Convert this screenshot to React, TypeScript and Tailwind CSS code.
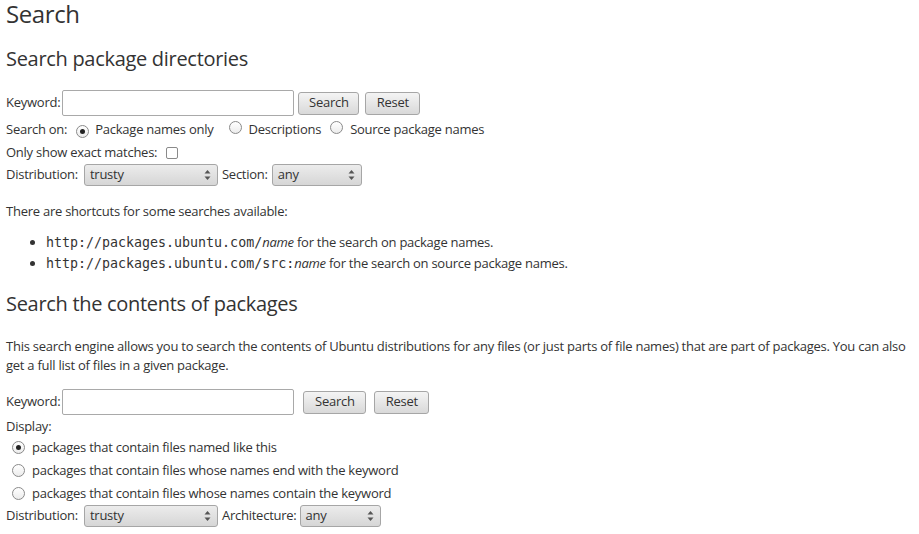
import React from "react";

const ui = "font-['Open_Sans',sans-serif] text-[13px] tracking-[-0.25px] text-[#333]";
const mono = "font-['DejaVu_Sans_Mono',monospace] text-[13.3px] tracking-normal";

function Radio({ checked }: { checked?: boolean }) {
  return (
    <span className="inline-flex h-[13px] w-[13px] shrink-0 items-center justify-center rounded-full border border-[#8a8a8a] bg-gradient-to-b from-[#ffffff] to-[#ececec]">
      {checked && <span className="h-[5px] w-[5px] rounded-full bg-[#222]" />}
    </span>
  );
}

function Button({ label, w }: { label: string; w: string }) {
  return (
    <button
      className={`${w} h-[23px] rounded-[3px] border border-[#a6a6a6] bg-gradient-to-b from-[#f4f4f4] to-[#d9d9d9] text-[13px] text-[#333]`}
    >
      {label}
    </button>
  );
}

function Select({ value, w }: { value: string; w: string }) {
  return (
    <div
      className={`${w} flex h-[22px] items-center justify-between rounded-[3px] border border-[#a6a6a6] bg-gradient-to-b from-[#ececec] to-[#d6d6d6] pl-[5px] pr-[6px]`}
    >
      <span>{value}</span>
      <svg width="7" height="12" viewBox="0 0 7 12">
        <path d="M0.5 4.5 L3.5 1 L6.5 4.5 Z" fill="#555" />
        <path d="M0.5 7.5 L3.5 11 L6.5 7.5 Z" fill="#555" />
      </svg>
    </div>
  );
}

function Input() {
  return <div className="h-[26px] w-[232px] rounded-[2px] border border-[#a9a9a9] bg-white" />;
}

export default function App() {
  return (
    <div className={`${ui} flex flex-col bg-white pl-[6px] pt-[1px]`}>
      <h1 className="text-[24px] leading-[26px] tracking-[-0.4px]">Search</h1>
      <h2 className="mt-[20px] text-[20px] leading-[24px] tracking-[-0.3px]">Search package directories</h2>

      {/* package search form */}
      <div className="mt-[19px] flex h-[26px] items-center">
        <span>Keyword:</span>
        <div className="ml-[2px]">
          <Input />
        </div>
        <div className="ml-[4px] flex gap-[6px]">
          <Button label="Search" w="w-[61px]" />
          <Button label="Reset" w="w-[55px]" />
        </div>
      </div>

      <div className="mt-[2px] flex h-[23px] items-center">
        <span>Search on:</span>
        <span className="ml-[9px]"><Radio checked /></span>
        <span className="ml-[6px]">Package names only</span>
        <span className="ml-[15px]"><Radio /></span>
        <span className="ml-[7px]">Descriptions</span>
        <span className="ml-[9px]"><Radio /></span>
        <span className="ml-[7px]">Source package names</span>
      </div>

      <div className="flex h-[23px] items-center">
        <span>Only show exact matches:</span>
        <span className="ml-[9px] h-[12px] w-[12px] rounded-[2px] border border-[#8a8a8a] bg-white" />
      </div>

      <div className="flex h-[22px] items-center">
        <span>Distribution:</span>
        <div className="ml-[6px]"><Select value="trusty" w="w-[134px]" /></div>
        <span className="ml-[4px]">Section:</span>
        <div className="ml-[4px]"><Select value="any" w="w-[90px]" /></div>
      </div>

      <p className="mt-[16px] leading-[18px]">There are shortcuts for some searches available:</p>

      <ul className="mt-[12px] list-disc pl-[40px] marker:text-[#333]">
        <li className="leading-[21px]">
          <code className={mono}>http://packages.ubuntu.com/</code>
          <i>name</i> for the search on package names.
        </li>
        <li className="leading-[21px]">
          <code className={mono}>http://packages.ubuntu.com/src:</code>
          <i>name</i> for the search on source package names.
        </li>
      </ul>

      <h2 className="mt-[18px] text-[20px] leading-[24px] tracking-[-0.3px]">Search the contents of packages</h2>

      <p className="mt-[21px] pr-[4px] leading-[19px]">
        This search engine allows you to search the contents of Ubuntu distributions for any files (or just parts of
        file names) that are part of packages. You can also get a full list of files in a given package.
      </p>

      {/* contents search form */}
      <div className="mt-[14px] flex h-[26px] items-center">
        <span>Keyword:</span>
        <div className="ml-[2px]">
          <Input />
        </div>
        <div className="ml-[9px] flex gap-[8px]">
          <Button label="Search" w="w-[63px]" />
          <Button label="Reset" w="w-[55px]" />
        </div>
      </div>

      <div className="mt-[1px] leading-[20px]">Display:</div>
      {[
        ["packages that contain files named like this", true],
        ["packages that contain files whose names end with the keyword", false],
        ["packages that contain files whose names contain the keyword", false],
      ].map(([text, checked], i) => (
        <div key={i} className="flex h-[23px] items-center pl-[6px]">
          <Radio checked={checked as boolean} />
          <span className="ml-[7px]">{text as string}</span>
        </div>
      ))}

      <div className="flex h-[22px] items-center">
        <span>Distribution:</span>
        <div className="ml-[6px]"><Select value="trusty" w="w-[134px]" /></div>
        <span className="ml-[4px]">Architecture:</span>
        <div className="ml-[3px]"><Select value="any" w="w-[81px]" /></div>
      </div>
    </div>
  );
}
